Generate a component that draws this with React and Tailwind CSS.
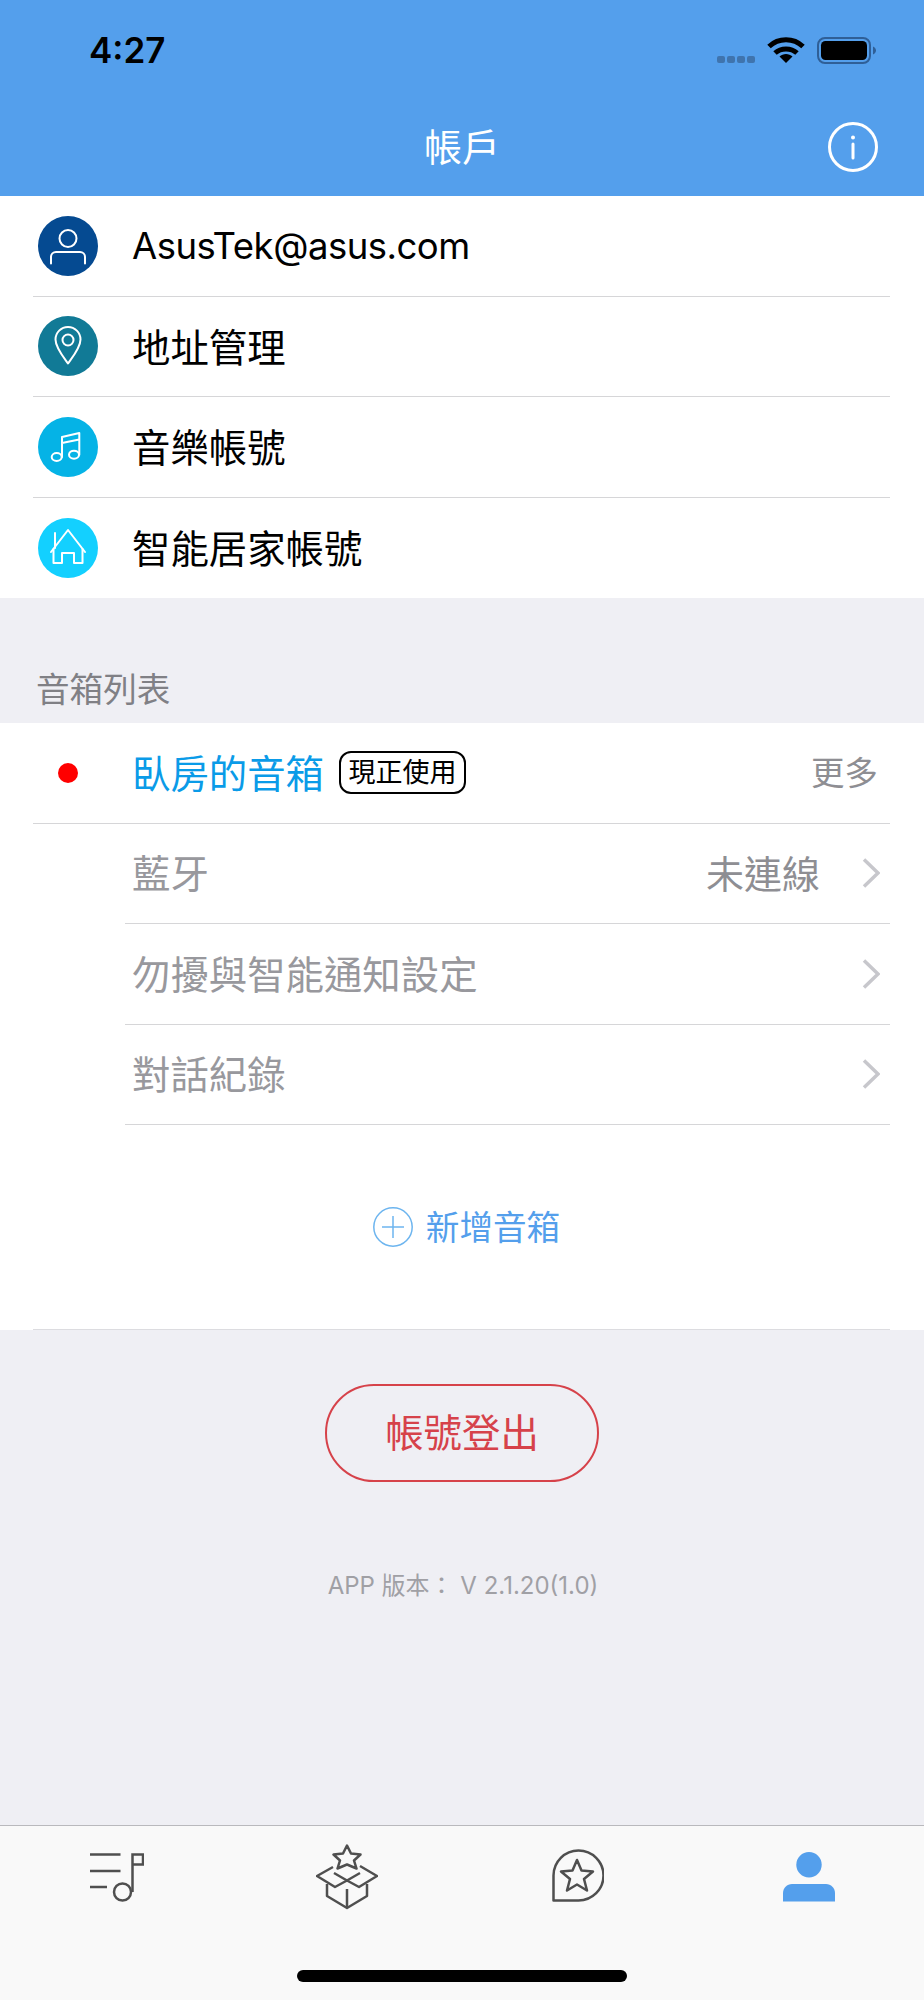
import React from 'react';

const accountRows = [
  { label: 'AsusTek@asus.com', bg: 'bg-[#054a91]', icon: 'person', text: 'text-[36.500px] tracking-[-0.5px] ml-[34px] mt-[1px]' },
  { label: '地址管理', bg: 'bg-[#117a96]', icon: 'pin', text: 'text-[38.400px] ml-[34px] mt-[3px]' },
  { label: '音樂帳號', bg: 'bg-[#05b3e6]', icon: 'music', text: 'text-[38.400px] ml-[34px] mt-[3px]' },
  { label: '智能居家帳號', bg: 'bg-[#13d0ff]', icon: 'home', text: 'text-[38.400px] ml-[34px] mt-[3px]' },
];

function RowIcon({ type }) {
  return (
    <svg width="60" height="60" viewBox="0 0 60 60" fill="none" stroke="white" strokeWidth="2" strokeLinecap="round" strokeLinejoin="round">
      {type === 'person' && (
        <>
          <circle cx="30" cy="22.5" r="8.5" />
          <path d="M13 47.5V41a5 5 0 0 1 5-5h24a5 5 0 0 1 5 5v6.5" />
        </>
      )}
      {type === 'pin' && (
        <>
          <path d="M30 47.5C25 40.5 17.5 31.5 17.5 23.5a12.5 12.5 0 0 1 25 0C42.5 31.500 35 40.500 30 47.500Z" />
          <circle cx="30" cy="24" r="5.500" />
        </>
      )}
      {type === 'music' && (
        <>
          <ellipse cx="18.700" cy="40" rx="5" ry="4" />
          <ellipse cx="36" cy="37.700" rx="5" ry="4" />
          <path d="M24 40V20L41.300 16V37.700M24 26L41.300 22.500" />
        </>
      )}
      {type === 'home' && (
        <>
          <path d="M13 34L30 12L47 34" />
          <path d="M17 30V15" />
          <path d="M15.500 31V45H24V35H36V45H44.500V31" />
        </>
      )}
    </svg>
  );
}

function Chevron() {
  return (
    <svg width="18" height="30" viewBox="0 0 18 30" fill="none" stroke="#c7c7cc" strokeWidth="3.500" className="shrink-0">
      <path d="M2 1.500L16 15L2 28.500" />
    </svg>
  );
}

function StatusIcons() {
  return (
    <div className="flex items-center">
      <div className="flex gap-[2px] mt-[19px] mr-[12px]">
        <span className="w-[8px] h-[7px] rounded-[2px] bg-[#3f74ae]" />
        <span className="w-[8px] h-[7px] rounded-[2px] bg-[#3f74ae]" />
        <span className="w-[8px] h-[7px] rounded-[2px] bg-[#3f74ae]" />
        <span className="w-[8px] h-[7px] rounded-[2px] bg-[#3f74ae]" />
      </div>
      <svg width="38" height="26" viewBox="0 0 38 26" fill="none" stroke="black" strokeWidth="5" className="mr-[12px]">
        <path d="M2 9.500C11.500 0.500 26.500 0.500 36 9.500" />
        <path d="M8 16C14 10.500 24 10.500 30 16" />
        <path d="M19 26L12.500 19.500C16 16 22 16 25.500 19.500Z" fill="black" stroke="none" />
      </svg>
      <svg width="59" height="27" viewBox="0 0 59 27">
        <rect x="1" y="1" width="52" height="25" rx="7" fill="none" stroke="#2f5f97" strokeWidth="2" />
        <rect x="4" y="4" width="46" height="19" rx="4.500" fill="black" />
        <path d="M56 9.500C58 10.500 59 12 59 13.500C59 15 58 16.500 56 17.500Z" fill="#2f5f97" />
      </svg>
    </div>
  );
}

export default function App() {
  return (
    <div className="w-[924px] h-[2000px] flex flex-col bg-[#efeff4] font-[Inter,'Noto_Sans_CJK_TC',sans-serif] overflow-hidden">
      <header className="h-[196px] shrink-0 bg-[#549fec] flex flex-col">
        <div className="h-[98px] pl-[89px] pr-[48px] pt-[2px] flex items-center justify-between">
          <span className="text-[35px] font-semibold text-black leading-none">4:27</span>
          <StatusIcons />
        </div>
        <div className="h-[98px] pr-[46px] grid grid-cols-[1fr_auto_1fr] items-center">
          <div />
          <h1 className="ml-[46px] text-[38px] font-normal text-white leading-none">帳戶</h1>
          <div className="flex justify-end">
            <svg width="50" height="50" viewBox="0 0 50 50" fill="none" stroke="white">
              <circle cx="25" cy="25" r="23.500" strokeWidth="3" />
              <circle cx="25" cy="15.500" r="2" fill="white" stroke="none" />
              <path d="M25 22V36" strokeWidth="3" strokeLinecap="round" />
            </svg>
          </div>
        </div>
      </header>

      <section className="bg-white h-[402px] shrink-0 pl-[33px] pr-[34px] flex flex-col">
        {accountRows.map((row, i) => (
          <div key={row.label} className={`h-[100.500px] flex items-center ${i < 3 ? 'border-b border-[#d6d6d8]' : ''}`}>
            <div className={`w-[60px] h-[60px] ml-[5px] rounded-full ${row.bg}`}>
              <RowIcon type={row.icon} />
            </div>
            <span className={`text-black leading-none ${row.text}`}>{row.label}</span>
          </div>
        ))}
      </section>

      <div className="h-[125px] shrink-0 pl-[36px] pb-[16px] flex items-end">
        <span className="text-[33.600px] text-[#808085] leading-none">音箱列表</span>
      </div>

      <section className="bg-white h-[607px] shrink-0 flex flex-col">
        <div className="h-[100.500px] mx-[33px] mr-[34px] border-b border-[#d6d6d8] flex items-center">
          <span className="w-[20px] h-[20px] ml-[25px] rounded-full bg-[#ff0000]" />
          <span className="ml-[54px] mt-[2px] text-[38.400px] text-[#0a9be8] leading-none">臥房的音箱</span>
          <span className="ml-[15px] w-[127px] h-[43px] border-2 border-black rounded-[12px] flex items-center justify-center text-[27px] text-black leading-none">現正使用</span>
          <span className="ml-auto mr-[12px] mt-[2px] text-[33.500px] text-[#8e8e93] leading-none">更多</span>
        </div>
        <div className="ml-[125px] mr-[34px] pl-[7px] pr-[10px] h-[100.500px] border-b border-[#d6d6d8] flex items-center">
          <span className="mt-[2px] text-[38.400px] text-[#98989d] leading-none">藍牙</span>
          <span className="ml-auto mr-[42px] mt-[2px] text-[38px] text-[#8e8e93] leading-none">未連線</span>
          <Chevron />
        </div>
        <div className="ml-[125px] mr-[34px] pl-[7px] pr-[10px] h-[100.500px] border-b border-[#d6d6d8] flex items-center justify-between">
          <span className="mt-[2px] text-[38.400px] text-[#98989d] leading-none">勿擾與智能通知設定</span>
          <Chevron />
        </div>
        <div className="ml-[125px] mr-[34px] pl-[7px] pr-[10px] h-[100.500px] border-b border-[#d6d6d8] flex items-center justify-between">
          <span className="mt-[2px] text-[38.400px] text-[#98989d] leading-none">對話紀錄</span>
          <Chevron />
        </div>
        <div className="flex-1 mx-[33px] mr-[34px] pl-[10px] border-b border-[#dcdce0] flex items-center justify-center">
          <svg width="40" height="40" viewBox="0 0 40 40" fill="none" stroke="#6db5ef" strokeWidth="1.500" className="mr-[13px]">
            <circle cx="20" cy="20" r="19.200" />
            <path d="M20 9V31M9 20H31" />
          </svg>
          <span className="mt-[1px] text-[33.600px] text-[#549fec] leading-none">新增音箱</span>
        </div>
      </section>

      <div className="flex flex-col items-center pt-[54px]">
        <button className="w-[274px] h-[98px] rounded-full border-2 border-[#d6424a] text-[38.400px] text-[#d6424a] leading-none">帳號登出</button>
        <p className="mt-[92px] ml-[2px] text-[24px] text-[#a0a0a5] leading-none">APP 版本： V 2.1.20(1.0)</p>
      </div>

      <nav className="mt-auto h-[175px] shrink-0 bg-[#f9f9f9] border-t border-[#b9b9bd] flex flex-col">
        <div className="h-[144px] grid grid-cols-4">
          <div className="flex justify-center">
            <svg width="54" height="49" viewBox="0 0 54 49" fill="none" stroke="#4f4f4f" strokeWidth="2.500" className="mt-[27px] ml-[3px]">
              <path d="M0 1.500H30.500M0 18H30.500M0 34H17" />
              <circle cx="32.500" cy="39" r="8.500" />
              <path d="M42.500 39V1.500H53V11.500H42.500" />
            </svg>
          </div>
          <div className="flex justify-center">
            <svg width="62" height="66" viewBox="0 0 62 66" fill="none" stroke="#4f4f4f" strokeWidth="2.500" strokeLinejoin="round" className="mt-[18px]">
              <path d="M31 1.500L35 9.500L44.500 10.500L38 16.500L40.500 24.500L31 20.500L21.500 24.500L24 16.500L17.500 10.500L27 9.500Z" />
              <path d="M17 23L1 32L19 43L31 36.500L43 43L61 32L44 22" />
              <path d="M31 36.500L18 29M31 36.500L44 29" />
              <path d="M11 40V52L31 64L51 52V40" />
              <path d="M31 45V64" />
            </svg>
          </div>
          <div className="flex justify-center">
            <svg width="52" height="53" viewBox="0 0 52 53" fill="none" stroke="#4f4f4f" strokeWidth="2.500" strokeLinejoin="round" className="mt-[23px]">
              <path d="M1.500 51.500V26.500A25 25 0 1 1 26.500 51.500Z" />
              <path d="M25 11L29.500 21.500L41 22.500L32 30L35 41.500L25 35.500L15 41.500L18 30L9 22.500L20.500 21.500Z" />
            </svg>
          </div>
          <div className="flex justify-center">
            <svg width="52" height="50" viewBox="0 0 52 50" fill="#549fec" className="mt-[26px]">
              <circle cx="26" cy="12.700" r="12.700" />
              <path d="M0 49.500V41C0 36 4 32 9 32H43C48 32 52 36 52 41V49.500Z" />
            </svg>
          </div>
        </div>
        <div className="w-[330px] h-[12px] mx-auto rounded-full bg-black" />
      </nav>
    </div>
  );
}
